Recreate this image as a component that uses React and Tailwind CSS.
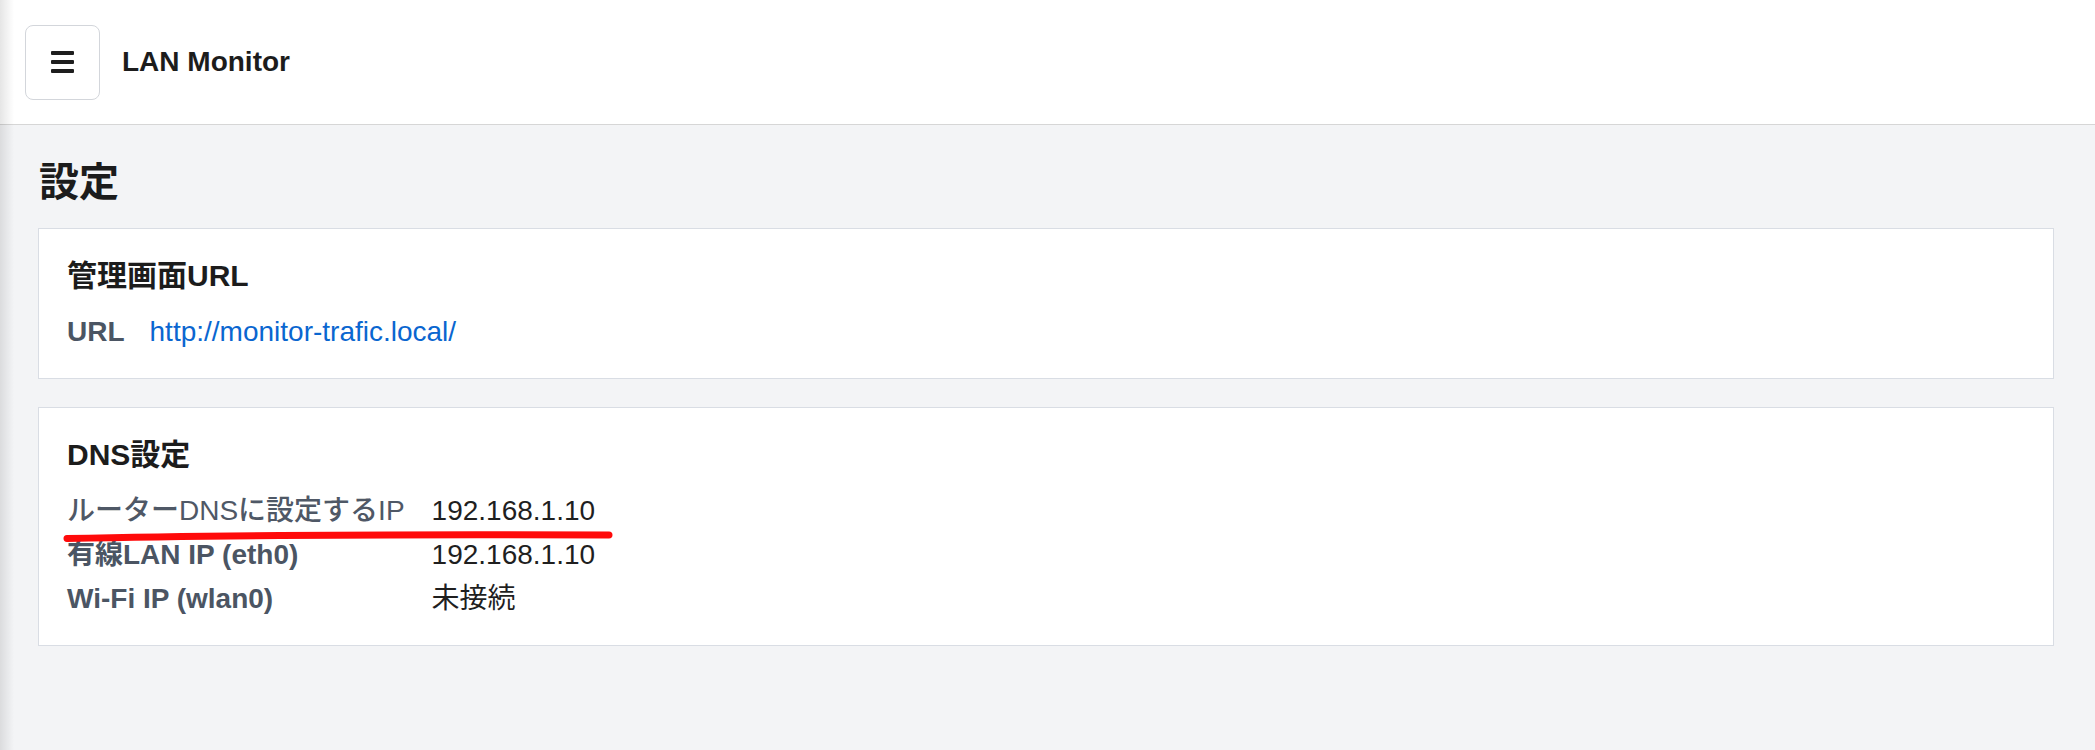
import React from "react";

const FONT = "font-['Liberation_Sans','Noto_Sans_CJK_JP',sans-serif]";

function Card({ title, children, className = "" }) {
  return (
    <section
      className={`relative bg-white border border-[#d9dde4] pt-[29px] pb-[24px] px-[28px] ${className}`}
    >
      <h2 className="text-[30px] leading-[36px] font-bold text-[#1c1c1c] mb-[16px]">{title}</h2>
      {children}
    </section>
  );
}

export default function App() {
  return (
    <div className={`relative min-h-[750px] bg-[#f3f4f6] ${FONT}`}>
      <header className="h-[125px] bg-white border-b border-[#d6d6d6] flex items-center pl-[25px] gap-[22px]">
        <button className="w-[75px] h-[75px] rounded-[8px] border border-[#d3d6db] bg-white flex flex-col items-center justify-center gap-[5px]">
          <span className="block w-[23px] h-[4px] bg-[#1e1e1e] rounded-[1px]" />
          <span className="block w-[23px] h-[4px] bg-[#1e1e1e] rounded-[1px]" />
          <span className="block w-[23px] h-[4px] bg-[#1e1e1e] rounded-[1px]" />
        </button>
        <div className="text-[28px] font-bold text-[#1c1c1c]">LAN Monitor</div>
      </header>

      <main className="pl-[38px] pr-[41px] pt-[33px]">
        <h1 className="text-[40px] leading-[48px] font-bold text-[#1c1c1c] pl-[1px] mb-[22px]">設定</h1>

        <div className="flex flex-col gap-[28px]">
          <Card title="管理画面URL">
            <div className="flex items-center gap-[25px] h-[44px] text-[28px]">
              <span className="font-bold text-[#4b5563]">URL</span>
              <a href="#" className="text-[#0a66d0]">http://monitor-trafic.local/</a>
            </div>
          </Card>

          <Card title="DNS設定">
            <div className="grid grid-cols-[auto_1fr] gap-x-[27px] text-[28px] leading-[44px]">
              <span className="font-medium text-[#4f5866]">ルーターDNSに設定するIP</span>
              <span className="text-[#1f1f1f]">192.168.1.10</span>
              <span className="font-bold text-[#4b5563]">有線LAN IP (eth0)</span>
              <span className="text-[#1f1f1f]">192.168.1.10</span>
              <span className="font-bold text-[#4b5563]">Wi-Fi IP (wlan0)</span>
              <span className="text-[#1f1f1f]">未接続</span>
            </div>
            <svg
              className="absolute left-[23px] top-[120px]"
              width="552"
              height="16"
              viewBox="0 0 552 16"
              fill="none"
            >
              <path
                d="M5 10.5 C 120 8, 300 6, 547 7"
                stroke="#ff0a0a"
                strokeWidth="7"
                strokeLinecap="round"
              />
            </svg>
          </Card>
        </div>
      </main>

      <div className="absolute left-0 top-0 bottom-0 w-[14px] bg-gradient-to-r from-black/10 to-transparent pointer-events-none" />
    </div>
  );
}
